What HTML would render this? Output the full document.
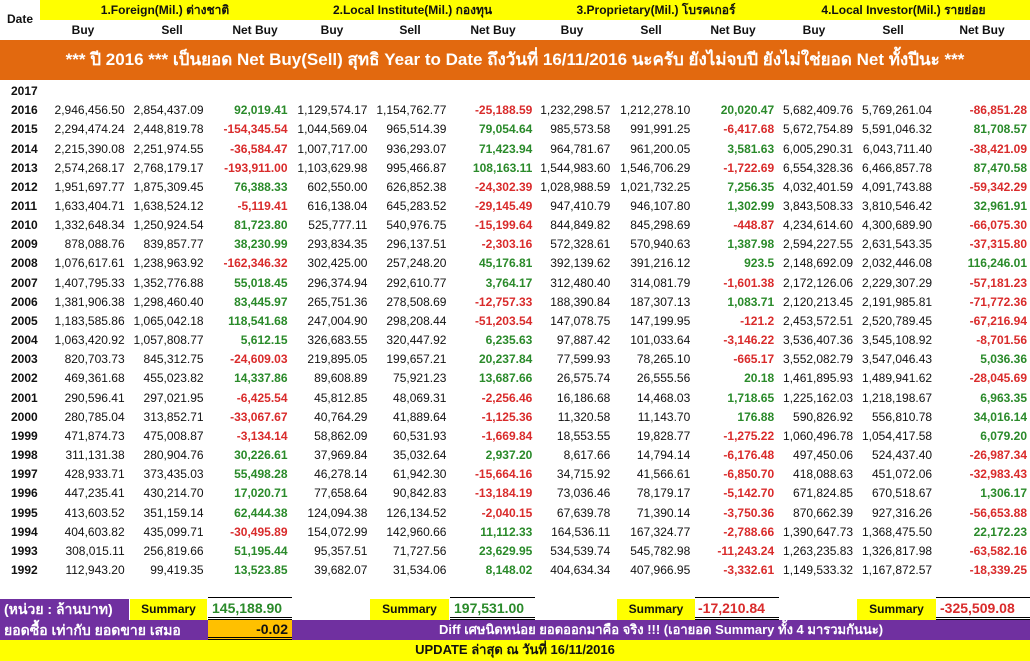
<!DOCTYPE html>
<html><head><meta charset="utf-8">
<style>
*{margin:0;padding:0;box-sizing:border-box}
body{width:1030px;height:661px;overflow:hidden;background:#fff;font-family:"Liberation Sans","DejaVu Sans",sans-serif;font-size:12px;color:#111;position:relative}
.ab{position:absolute}
table{border-collapse:collapse;table-layout:fixed;position:absolute;left:0;top:82px}
td{height:19.16px;padding:0 3px 0 0;text-align:right;white-space:nowrap;overflow:visible;line-height:19px}
td:first-child{text-align:left;padding-left:11px;font-weight:bold}
td.g{color:#2a8a2a;font-weight:bold}
td.r{color:#d92b2b;font-weight:bold}
.hdr{font-weight:bold;font-size:12px;text-align:center;position:absolute;line-height:18px}
</style></head><body>
<div class="ab" style="left:40px;top:0;width:990px;height:20px;background:#ffff00"></div>
<div class="hdr" style="left:0;top:10px;width:40px">Date</div>
<div class="hdr" style="left:40px;top:1px;width:250px">1.Foreign(Mil.) ต่างชาติ</div>
<div class="hdr" style="left:290px;top:1px;width:245px">2.Local Institute(Mil.) กองทุน</div>
<div class="hdr" style="left:535px;top:1px;width:242px">3.Proprietary(Mil.) โบรคเกอร์</div>
<div class="hdr" style="left:777px;top:1px;width:253px">4.Local Investor(Mil.) รายย่อย</div>
<div class="hdr" style="left:55px;top:21px;width:56px">Buy</div>
<div class="hdr" style="left:144px;top:21px;width:56px">Sell</div>
<div class="hdr" style="left:222px;top:21px;width:66px">Net Buy</div>
<div class="hdr" style="left:304px;top:21px;width:56px">Buy</div>
<div class="hdr" style="left:382px;top:21px;width:56px">Sell</div>
<div class="hdr" style="left:460px;top:21px;width:66px">Net Buy</div>
<div class="hdr" style="left:544px;top:21px;width:56px">Buy</div>
<div class="hdr" style="left:623px;top:21px;width:56px">Sell</div>
<div class="hdr" style="left:700px;top:21px;width:66px">Net Buy</div>
<div class="hdr" style="left:786px;top:21px;width:56px">Buy</div>
<div class="hdr" style="left:865px;top:21px;width:56px">Sell</div>
<div class="hdr" style="left:949px;top:21px;width:66px">Net Buy</div>
<div class="ab" style="left:0;top:40px;width:1030px;height:40px;background:#e2690f;color:#fff;font-weight:bold;font-size:17px;line-height:40px;text-align:center;white-space:nowrap">*** ปี 2016 *** เป็นยอด Net Buy(Sell) สุทธิ Year to Date ถึงวันที่ 16/11/2016 นะครับ ยังไม่จบปี ยังไม่ใช่ยอด Net ทั้งปีนะ ***</div>
<table>
<colgroup><col style="width:40px"><col style="width:87px"><col style="width:79px"><col style="width:84px"><col style="width:80px"><col style="width:79px"><col style="width:86px"><col style="width:78px"><col style="width:80px"><col style="width:84px"><col style="width:79px"><col style="width:79px"><col style="width:95px"></colgroup>
<tr><td>2017</td><td></td><td></td><td></td><td></td><td></td><td></td><td></td><td></td><td></td><td></td><td></td><td></td></tr>
<tr><td>2016</td><td>2,946,456.50</td><td>2,854,437.09</td><td class="g">92,019.41</td><td>1,129,574.17</td><td>1,154,762.77</td><td class="r">-25,188.59</td><td>1,232,298.57</td><td>1,212,278.10</td><td class="g">20,020.47</td><td>5,682,409.76</td><td>5,769,261.04</td><td class="r">-86,851.28</td></tr>
<tr><td>2015</td><td>2,294,474.24</td><td>2,448,819.78</td><td class="r">-154,345.54</td><td>1,044,569.04</td><td>965,514.39</td><td class="g">79,054.64</td><td>985,573.58</td><td>991,991.25</td><td class="r">-6,417.68</td><td>5,672,754.89</td><td>5,591,046.32</td><td class="g">81,708.57</td></tr>
<tr><td>2014</td><td>2,215,390.08</td><td>2,251,974.55</td><td class="r">-36,584.47</td><td>1,007,717.00</td><td>936,293.07</td><td class="g">71,423.94</td><td>964,781.67</td><td>961,200.05</td><td class="g">3,581.63</td><td>6,005,290.31</td><td>6,043,711.40</td><td class="r">-38,421.09</td></tr>
<tr><td>2013</td><td>2,574,268.17</td><td>2,768,179.17</td><td class="r">-193,911.00</td><td>1,103,629.98</td><td>995,466.87</td><td class="g">108,163.11</td><td>1,544,983.60</td><td>1,546,706.29</td><td class="r">-1,722.69</td><td>6,554,328.36</td><td>6,466,857.78</td><td class="g">87,470.58</td></tr>
<tr><td>2012</td><td>1,951,697.77</td><td>1,875,309.45</td><td class="g">76,388.33</td><td>602,550.00</td><td>626,852.38</td><td class="r">-24,302.39</td><td>1,028,988.59</td><td>1,021,732.25</td><td class="g">7,256.35</td><td>4,032,401.59</td><td>4,091,743.88</td><td class="r">-59,342.29</td></tr>
<tr><td>2011</td><td>1,633,404.71</td><td>1,638,524.12</td><td class="r">-5,119.41</td><td>616,138.04</td><td>645,283.52</td><td class="r">-29,145.49</td><td>947,410.79</td><td>946,107.80</td><td class="g">1,302.99</td><td>3,843,508.33</td><td>3,810,546.42</td><td class="g">32,961.91</td></tr>
<tr><td>2010</td><td>1,332,648.34</td><td>1,250,924.54</td><td class="g">81,723.80</td><td>525,777.11</td><td>540,976.75</td><td class="r">-15,199.64</td><td>844,849.82</td><td>845,298.69</td><td class="r">-448.87</td><td>4,234,614.60</td><td>4,300,689.90</td><td class="r">-66,075.30</td></tr>
<tr><td>2009</td><td>878,088.76</td><td>839,857.77</td><td class="g">38,230.99</td><td>293,834.35</td><td>296,137.51</td><td class="r">-2,303.16</td><td>572,328.61</td><td>570,940.63</td><td class="g">1,387.98</td><td>2,594,227.55</td><td>2,631,543.35</td><td class="r">-37,315.80</td></tr>
<tr><td>2008</td><td>1,076,617.61</td><td>1,238,963.92</td><td class="r">-162,346.32</td><td>302,425.00</td><td>257,248.20</td><td class="g">45,176.81</td><td>392,139.62</td><td>391,216.12</td><td class="g">923.5</td><td>2,148,692.09</td><td>2,032,446.08</td><td class="g">116,246.01</td></tr>
<tr><td>2007</td><td>1,407,795.33</td><td>1,352,776.88</td><td class="g">55,018.45</td><td>296,374.94</td><td>292,610.77</td><td class="g">3,764.17</td><td>312,480.40</td><td>314,081.79</td><td class="r">-1,601.38</td><td>2,172,126.06</td><td>2,229,307.29</td><td class="r">-57,181.23</td></tr>
<tr><td>2006</td><td>1,381,906.38</td><td>1,298,460.40</td><td class="g">83,445.97</td><td>265,751.36</td><td>278,508.69</td><td class="r">-12,757.33</td><td>188,390.84</td><td>187,307.13</td><td class="g">1,083.71</td><td>2,120,213.45</td><td>2,191,985.81</td><td class="r">-71,772.36</td></tr>
<tr><td>2005</td><td>1,183,585.86</td><td>1,065,042.18</td><td class="g">118,541.68</td><td>247,004.90</td><td>298,208.44</td><td class="r">-51,203.54</td><td>147,078.75</td><td>147,199.95</td><td class="r">-121.2</td><td>2,453,572.51</td><td>2,520,789.45</td><td class="r">-67,216.94</td></tr>
<tr><td>2004</td><td>1,063,420.92</td><td>1,057,808.77</td><td class="g">5,612.15</td><td>326,683.55</td><td>320,447.92</td><td class="g">6,235.63</td><td>97,887.42</td><td>101,033.64</td><td class="r">-3,146.22</td><td>3,536,407.36</td><td>3,545,108.92</td><td class="r">-8,701.56</td></tr>
<tr><td>2003</td><td>820,703.73</td><td>845,312.75</td><td class="r">-24,609.03</td><td>219,895.05</td><td>199,657.21</td><td class="g">20,237.84</td><td>77,599.93</td><td>78,265.10</td><td class="r">-665.17</td><td>3,552,082.79</td><td>3,547,046.43</td><td class="g">5,036.36</td></tr>
<tr><td>2002</td><td>469,361.68</td><td>455,023.82</td><td class="g">14,337.86</td><td>89,608.89</td><td>75,921.23</td><td class="g">13,687.66</td><td>26,575.74</td><td>26,555.56</td><td class="g">20.18</td><td>1,461,895.93</td><td>1,489,941.62</td><td class="r">-28,045.69</td></tr>
<tr><td>2001</td><td>290,596.41</td><td>297,021.95</td><td class="r">-6,425.54</td><td>45,812.85</td><td>48,069.31</td><td class="r">-2,256.46</td><td>16,186.68</td><td>14,468.03</td><td class="g">1,718.65</td><td>1,225,162.03</td><td>1,218,198.67</td><td class="g">6,963.35</td></tr>
<tr><td>2000</td><td>280,785.04</td><td>313,852.71</td><td class="r">-33,067.67</td><td>40,764.29</td><td>41,889.64</td><td class="r">-1,125.36</td><td>11,320.58</td><td>11,143.70</td><td class="g">176.88</td><td>590,826.92</td><td>556,810.78</td><td class="g">34,016.14</td></tr>
<tr><td>1999</td><td>471,874.73</td><td>475,008.87</td><td class="r">-3,134.14</td><td>58,862.09</td><td>60,531.93</td><td class="r">-1,669.84</td><td>18,553.55</td><td>19,828.77</td><td class="r">-1,275.22</td><td>1,060,496.78</td><td>1,054,417.58</td><td class="g">6,079.20</td></tr>
<tr><td>1998</td><td>311,131.38</td><td>280,904.76</td><td class="g">30,226.61</td><td>37,969.84</td><td>35,032.64</td><td class="g">2,937.20</td><td>8,617.66</td><td>14,794.14</td><td class="r">-6,176.48</td><td>497,450.06</td><td>524,437.40</td><td class="r">-26,987.34</td></tr>
<tr><td>1997</td><td>428,933.71</td><td>373,435.03</td><td class="g">55,498.28</td><td>46,278.14</td><td>61,942.30</td><td class="r">-15,664.16</td><td>34,715.92</td><td>41,566.61</td><td class="r">-6,850.70</td><td>418,088.63</td><td>451,072.06</td><td class="r">-32,983.43</td></tr>
<tr><td>1996</td><td>447,235.41</td><td>430,214.70</td><td class="g">17,020.71</td><td>77,658.64</td><td>90,842.83</td><td class="r">-13,184.19</td><td>73,036.46</td><td>78,179.17</td><td class="r">-5,142.70</td><td>671,824.85</td><td>670,518.67</td><td class="g">1,306.17</td></tr>
<tr><td>1995</td><td>413,603.52</td><td>351,159.14</td><td class="g">62,444.38</td><td>124,094.38</td><td>126,134.52</td><td class="r">-2,040.15</td><td>67,639.78</td><td>71,390.14</td><td class="r">-3,750.36</td><td>870,662.39</td><td>927,316.26</td><td class="r">-56,653.88</td></tr>
<tr><td>1994</td><td>404,603.82</td><td>435,099.71</td><td class="r">-30,495.89</td><td>154,072.99</td><td>142,960.66</td><td class="g">11,112.33</td><td>164,536.11</td><td>167,324.77</td><td class="r">-2,788.66</td><td>1,390,647.73</td><td>1,368,475.50</td><td class="g">22,172.23</td></tr>
<tr><td>1993</td><td>308,015.11</td><td>256,819.66</td><td class="g">51,195.44</td><td>95,357.51</td><td>71,727.56</td><td class="g">23,629.95</td><td>534,539.74</td><td>545,782.98</td><td class="r">-11,243.24</td><td>1,263,235.83</td><td>1,326,817.98</td><td class="r">-63,582.16</td></tr>
<tr><td>1992</td><td>112,943.20</td><td>99,419.35</td><td class="g">13,523.85</td><td>39,682.07</td><td>31,534.06</td><td class="g">8,148.02</td><td>404,634.34</td><td>407,966.95</td><td class="r">-3,332.61</td><td>1,149,533.32</td><td>1,167,872.57</td><td class="r">-18,339.25</td></tr>
</table>
<!-- summary row -->
<div class="ab" style="left:0;top:599px;width:129px;height:21px;background:#7030a0;color:#fff;font-weight:bold;font-size:14px;line-height:21px;padding-left:4px;white-space:nowrap">(หน่วย : ล้านบาท)</div>
<div class="ab" style="left:130px;top:599px;width:77px;height:21px;background:#ffff00;font-weight:bold;line-height:21px;text-align:center">Summary</div>
<div class="ab" style="left:208px;top:597px;width:84px;height:23px;border-top:1px solid #000;border-bottom:3px double #000;color:#2a8a2a;font-weight:bold;font-size:14px;line-height:20px;padding-left:4px">145,188.90</div>
<div class="ab" style="left:370px;top:599px;width:79px;height:21px;background:#ffff00;font-weight:bold;line-height:21px;text-align:center">Summary</div>
<div class="ab" style="left:450px;top:597px;width:85px;height:23px;border-top:1px solid #000;border-bottom:3px double #000;color:#2a8a2a;font-weight:bold;font-size:14px;line-height:20px;padding-left:4px">197,531.00</div>
<div class="ab" style="left:617px;top:599px;width:78px;height:21px;background:#ffff00;font-weight:bold;line-height:21px;text-align:center">Summary</div>
<div class="ab" style="left:695px;top:597px;width:84px;height:23px;border-top:1px solid #000;border-bottom:3px double #000;color:#d92b2b;font-weight:bold;font-size:14px;line-height:20px;padding-left:3px">-17,210.84</div>
<div class="ab" style="left:857px;top:599px;width:79px;height:21px;background:#ffff00;font-weight:bold;line-height:21px;text-align:center">Summary</div>
<div class="ab" style="left:936px;top:597px;width:94px;height:23px;border-top:1px solid #000;border-bottom:3px double #000;color:#d92b2b;font-weight:bold;font-size:14px;line-height:20px;padding-left:4px">-325,509.08</div>
<!-- purple row -->
<div class="ab" style="left:0;top:620px;width:1030px;height:20px;background:#7030a0"></div>
<div class="ab" style="left:4px;top:620px;width:204px;height:20px;color:#fff;font-weight:bold;font-size:14px;line-height:20px;white-space:nowrap">ยอดซื้อ เท่ากับ ยอดขาย เสมอ</div>
<div class="ab" style="left:208px;top:620px;width:84px;height:20px;background:#ffc000;border-bottom:3px double #000;font-weight:bold;font-size:14px;line-height:19px;text-align:right;padding-right:4px">-0.02</div>
<div class="ab" style="left:292px;top:620px;width:738px;height:20px;color:#fff;font-weight:bold;font-size:13px;line-height:20px;text-align:center;white-space:nowrap">Diff เศษนิดหน่อย ยอดออกมาคือ จริง !!! (เอายอด Summary ทั้ง 4 มารวมกันนะ)</div>
<!-- yellow update row -->
<div class="ab" style="left:0;top:640px;width:1030px;height:21px;background:#ffff00;font-weight:bold;font-size:13px;line-height:20px;text-align:center;white-space:nowrap">UPDATE ล่าสุด ณ วันที่ 16/11/2016</div>
</body></html>
